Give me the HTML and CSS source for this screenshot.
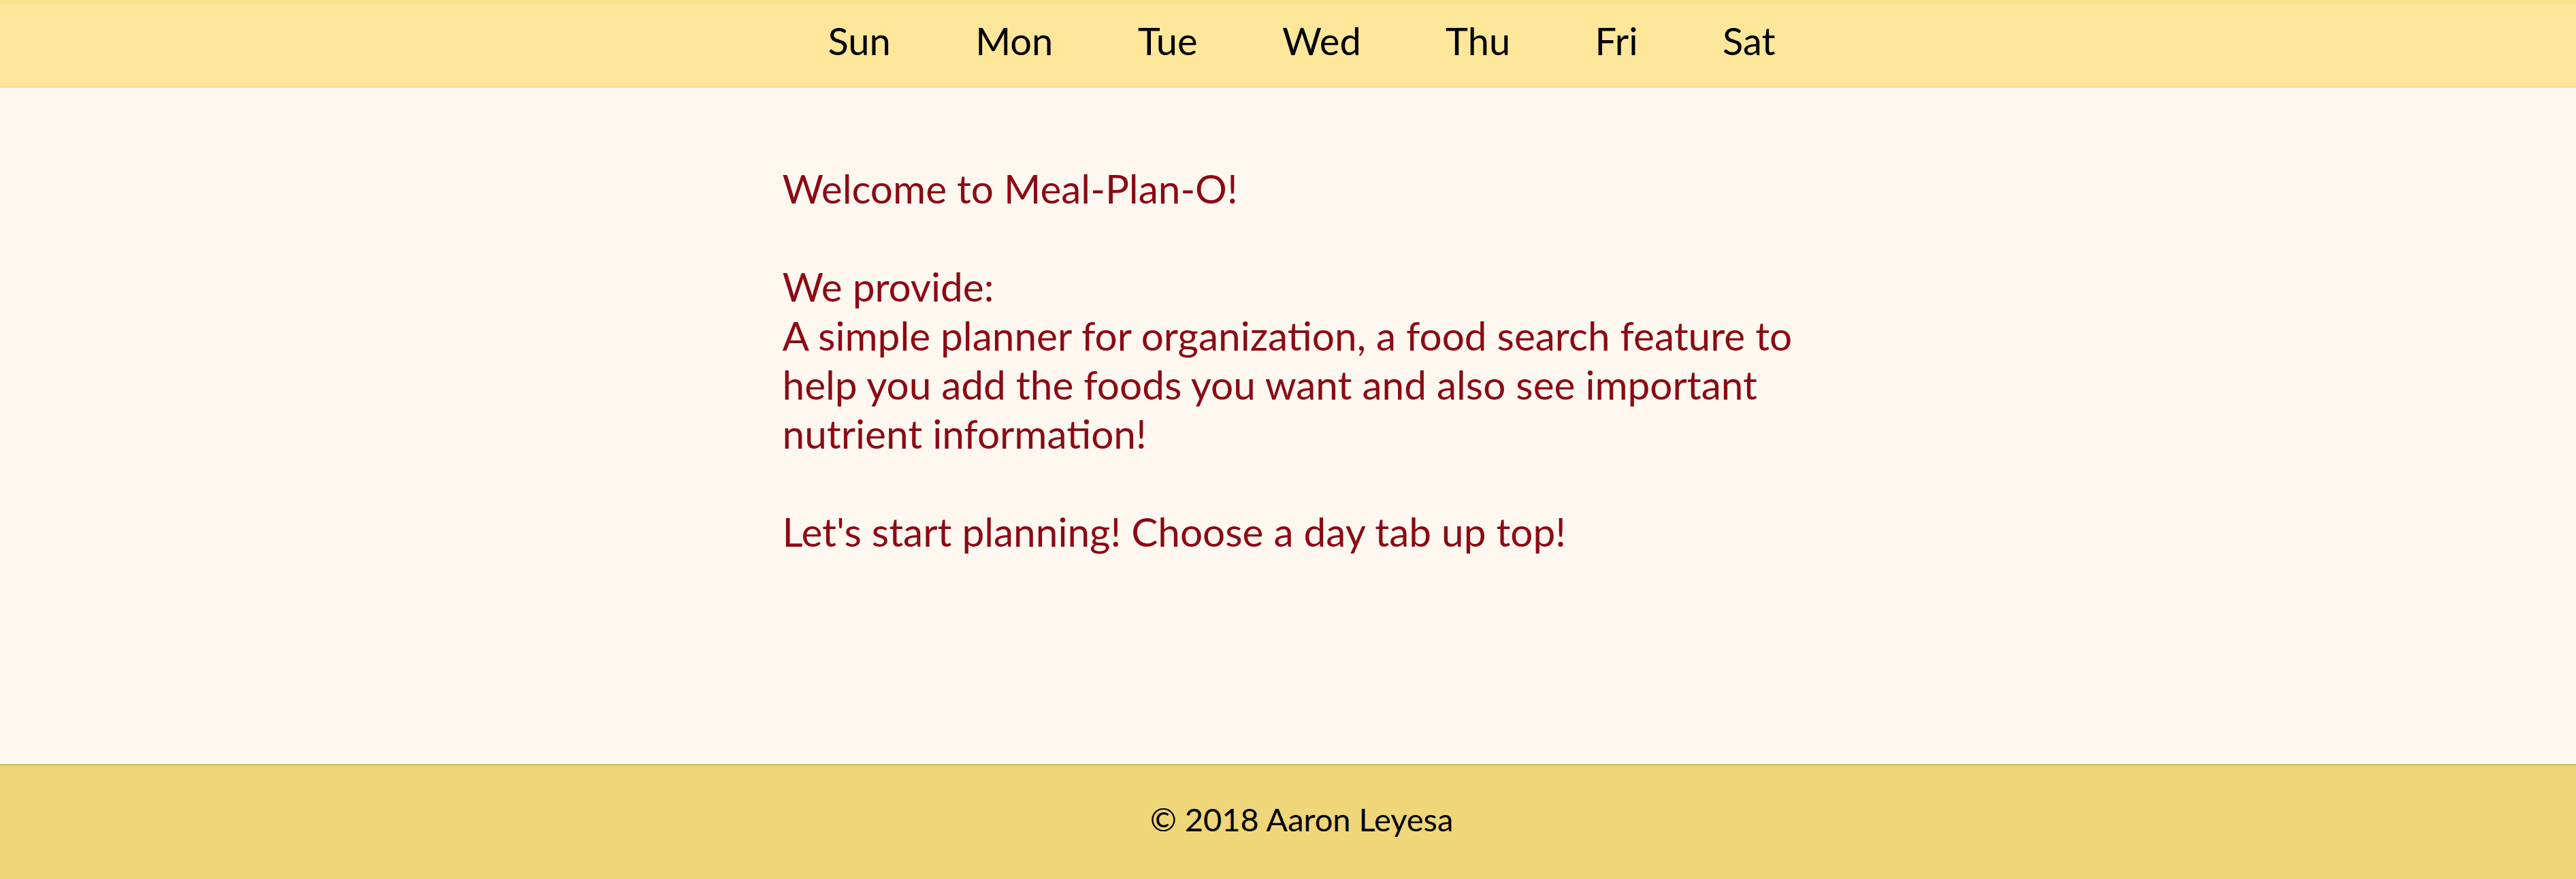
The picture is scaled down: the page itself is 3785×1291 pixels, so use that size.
FILE: index.html
```html
<!DOCTYPE html>
<html lang="en">
<head>
<meta charset="utf-8">
<title>Meal-Plan-O</title>
<link rel="stylesheet" href="styles.css">
</head>
<body>
<header class="topbar">
  <ul class="days">
    <li class="day">Sun</li>
    <li class="day">Mon</li>
    <li class="day">Tue</li>
    <li class="day">Wed</li>
    <li class="day">Thu</li>
    <li class="day">Fri</li>
    <li class="day">Sat</li>
  </ul>
</header>
<main class="content">
  <div class="intro">
    <p class="line">Welcome to Meal-Plan-O!</p>
    <p class="line blank">&nbsp;</p>
    <p class="line">We provide:</p>
    <p class="line">A simple planner for organization, a food search feature to</p>
    <p class="line">help you add the foods you want and also see important</p>
    <p class="line">nutrient information!</p>
    <p class="line blank">&nbsp;</p>
    <p class="line">Let's start planning! Choose a day tab up top!</p>
  </div>
</main>
<footer class="footer">
  <p class="copy">© 2018 Aaron Leyesa</p>
</footer>
</body>
</html>
```

FILE: styles.css
```css
html, body {
  margin: 0;
  padding: 0;
}

body {
  min-height: 100vh;
  display: flex;
  flex-direction: column;
  background: #fff8f1;
  font-family: "Lato", "Noto Sans", sans-serif;
}

.topbar {
  background: #fee79a;
  border-top: 6px solid #f9df8a;
  border-bottom: 3px solid #fbe18e;
  box-sizing: border-box;
  height: 129px;
}

.days {
  list-style: none;
  margin: 0;
  padding: 20px 0 0 40px;
  text-align: center;
  font-size: 56px;
  line-height: 1.2;
  color: #000;
}

.day {
  display: inline-block;
  padding: 0 55px;
}

.content {
  flex: 1;
  padding-top: 111px;
}

.intro {
  width: 1486px;
  margin: 0 auto;
  color: #8b0a14;
  font-size: 58.5px;
  line-height: 72px;
}

.line {
  margin: 0;
  white-space: nowrap;
}

.footer {
  background: #efd679;
  border-top: 3px solid #d8c26d;
  height: 169px;
  box-sizing: border-box;
  padding: 50px 0 0 40px;
  text-align: center;
}

.copy {
  margin: 0;
  font-size: 47px;
  line-height: 1.2;
  color: #000;
}
```
